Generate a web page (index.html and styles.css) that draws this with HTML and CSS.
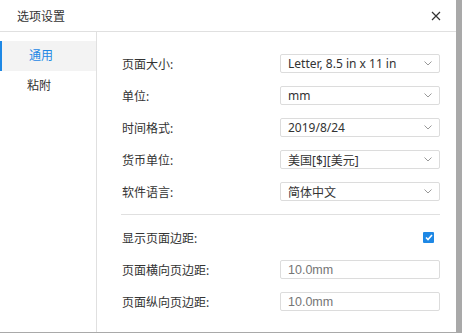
FILE: index.html
```html
<!DOCTYPE html>
<html lang="zh-CN">
<head>
    <meta charset="UTF-8">
    <title>选项设置</title>
    <link rel="stylesheet" href="styles.css">
</head>
<body>
    <div class="dialog">
        <header class="dialog-header">
            <span class="dialog-title">选项设置</span>
            <button class="close-btn" aria-label="关闭">
                <svg width="10" height="10" viewBox="0 0 10 10"><path d="M1 1L9 9M9 1L1 9" stroke="#333" stroke-width="1.2" fill="none"/></svg>
            </button>
        </header>
        <div class="dialog-body">
            <nav class="sidebar">
                <div class="nav-item active">通用</div>
                <div class="nav-item">粘附</div>
            </nav>
            <div class="content">
                <div class="form-row">
                    <label>页面大小:</label>
                    <div class="select">Letter, 8.5 in x 11 in<svg class="chev" width="8" height="5" viewBox="0 0 8 5"><path d="M0.5 0.5L4 4L7.5 0.5" stroke="#999" fill="none"/></svg></div>
                </div>
                <div class="form-row">
                    <label>单位:</label>
                    <div class="select">mm<svg class="chev" width="8" height="5" viewBox="0 0 8 5"><path d="M0.5 0.5L4 4L7.5 0.5" stroke="#999" fill="none"/></svg></div>
                </div>
                <div class="form-row">
                    <label>时间格式:</label>
                    <div class="select">2019/8/24<svg class="chev" width="8" height="5" viewBox="0 0 8 5"><path d="M0.5 0.5L4 4L7.5 0.5" stroke="#999" fill="none"/></svg></div>
                </div>
                <div class="form-row">
                    <label>货币单位:</label>
                    <div class="select">美国[$][美元]<svg class="chev" width="8" height="5" viewBox="0 0 8 5"><path d="M0.5 0.5L4 4L7.5 0.5" stroke="#999" fill="none"/></svg></div>
                </div>
                <div class="form-row">
                    <label>软件语言:</label>
                    <div class="select">简体中文<svg class="chev" width="8" height="5" viewBox="0 0 8 5"><path d="M0.5 0.5L4 4L7.5 0.5" stroke="#999" fill="none"/></svg></div>
                </div>
                <hr class="divider">
                <div class="form-row">
                    <label>显示页面边距:</label>
                    <span class="checkbox">
                        <svg width="8" height="7" viewBox="0 0 8 7"><path d="M1 3.5L3 5.5L7 1" stroke="#fff" stroke-width="1.6" fill="none"/></svg>
                    </span>
                </div>
                <div class="form-row">
                    <label>页面横向页边距:</label>
                    <div class="input">10.0mm</div>
                </div>
                <div class="form-row">
                    <label>页面纵向页边距:</label>
                    <div class="input">10.0mm</div>
                </div>
            </div>
        </div>
    </div>
</body>
</html>
```

FILE: styles.css
```css
body {
    margin: 0;
    background-color: #a9a9a9;
    font-family: "Noto Sans", "Noto Sans CJK SC", sans-serif;
    font-size: 12px;
    color: #333;
}

.dialog {
    width: 456px;
    height: 332px;
    background-color: #fff;
    display: flex;
    flex-direction: column;
}

.dialog-header {
    height: 31px;
    border-bottom: 1px solid #e0e0e0;
    display: flex;
    align-items: center;
    justify-content: space-between;
    padding: 0 17px;
}

.dialog-title {
    font-size: 12px;
    color: #333;
}

.close-btn {
    border: none;
    background: none;
    padding: 0;
    margin-right: -2px;
    display: flex;
    cursor: pointer;
}

.dialog-body {
    flex: 1;
    display: flex;
}

.sidebar {
    width: 96px;
    border-right: 1px solid #e0e0e0;
    padding-top: 9px;
}

.nav-item {
    height: 30px;
    line-height: 30px;
    padding-left: 27px;
    color: #333;
}

.nav-item.active {
    background-color: #f3f3f3;
    color: #1e88e5;
    box-shadow: inset 2px 0 0 #1e88e5;
    padding-left: 29px;
}

.content {
    flex: 1;
    padding: 22px 16px 0 24px;
    display: flex;
    flex-direction: column;
    gap: 13px;
}

.form-row {
    height: 19px;
    display: flex;
    align-items: center;
    justify-content: space-between;
}

.form-row label {
    padding-left: 1px;
}

.select, .input {
    height: 17px;
    border: 1px solid #dcdcdc;
    border-radius: 2px;
    display: flex;
    align-items: center;
    justify-content: space-between;
    padding: 0 0 0 7px;
}

.select {
    width: 144px;
    padding-right: 7px;
}

.input {
    width: 151px;
    color: #757575;
    font-family: "Liberation Sans", Arial, sans-serif;
    font-size: 12.5px;
}

.chev {
    flex-shrink: 0;
}

.divider {
    border: none;
    border-top: 1px solid #e0e0e0;
    margin: 0;
}

.checkbox {
    width: 11px;
    height: 11px;
    background-color: #1e88e5;
    border-radius: 1px;
    display: flex;
    align-items: center;
    justify-content: center;
    margin-right: 6px;
}
```
